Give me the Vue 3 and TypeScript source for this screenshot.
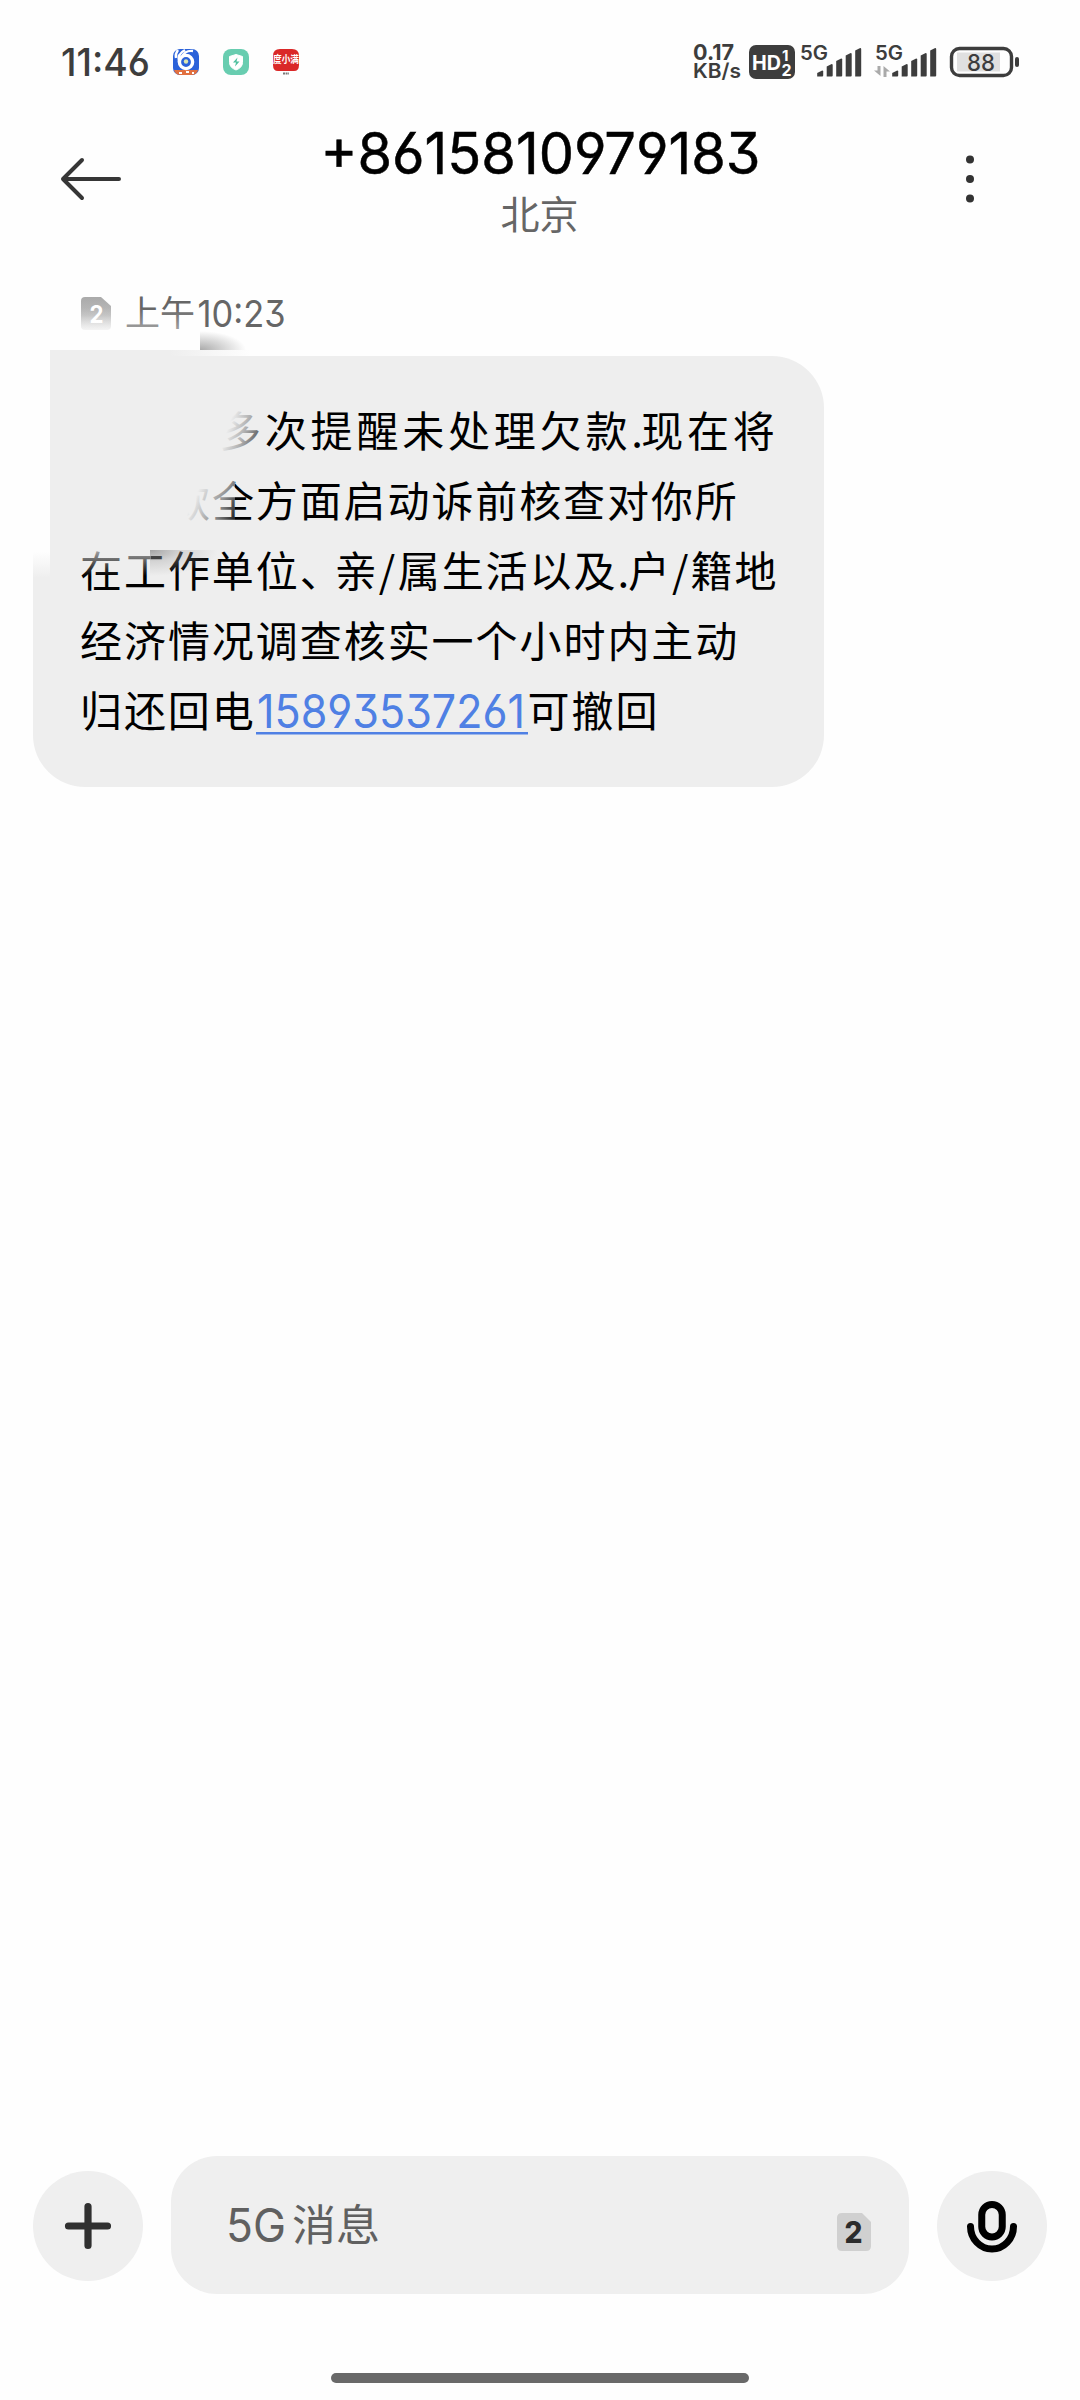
<script setup lang="ts">
interface Segment {
  text: string
  width?: number
  link?: boolean
}
interface Line {
  indent: number
  spacing: number
  segments: Segment[]
}

const lines: Line[] = [
  {
    indent: 139,
    spacing: 3.8,
    segments: [{ text: '多次提醒未处理欠款' }, { text: '.', width: 10 }, { text: '现在将' }],
  },
  { indent: 88, spacing: 1.9, segments: [{ text: '款全方面启动诉前核查对你所' }] },
  {
    indent: 0,
    spacing: 1.95,
    segments: [
      { text: '在工作单位' },
      { text: '、', width: 35 },
      { text: '亲' },
      { text: '/', width: 19 },
      { text: '属生活以及' },
      { text: '.', width: 10.5 },
      { text: '户' },
      { text: '/', width: 18.5 },
      { text: '籍地' },
    ],
  },
  { indent: 0, spacing: 1.95, segments: [{ text: '经济情况调查核实一个小时内主动' }] },
  {
    indent: 0,
    spacing: 1.9,
    segments: [{ text: '归还回电' }, { text: '15893537261', link: true }, { text: '可撤回' }],
  },
]

const bars = [0, 1, 2, 3, 4]
</script>

<template>
  <div class="screen">
    <header class="status">
      <svg width="320" height="110" viewBox="0 0 320 110">
        <text x="61" y="76" class="num" font-size="38" font-weight="500" fill="#3d3d3d" textLength="89" lengthAdjust="spacingAndGlyphs">11:46</text>
        <g>
          <rect x="173" y="49" width="26" height="26" rx="7" fill="#2b62d9" />
          <path d="M174 70h24q-1 5-7 5h-10q-6 0-7-5z" fill="#e2703f" />
          <path d="M179 73h3m4-1h3m3 1h2" stroke="#fff" stroke-width="2" />
          <circle cx="186" cy="62" r="6.6" fill="none" stroke="#fff" stroke-width="3.4" />
          <path d="M179 62q-2-8 6-12M182 57q3-7 11-6M176 58q-1-4 2-8" fill="none" stroke="#fff" stroke-width="2.4" />
          <circle cx="186" cy="61.500" r="2.200" fill="#dbe6b0" />
        </g>
        <g>
          <rect x="223" y="49" width="26" height="26" rx="8" fill="#68cdb0" />
          <path d="M236 54.500l6.500 2v6q0 5-6.500 7.500q-6.500-2.500-6.500-7.500v-6z" fill="#fff" stroke="#fff" stroke-linejoin="round" />
          <path d="M237.500 57.500l-4.500 5h3l-1 4 4.500-5h-3z" fill="#4dbf9e" />
        </g>
        <g>
          <path d="M280 49h12q7 0 7 7v9q0 6-5 6h-16q-5 0-5-6v-9q0-7 7-7z" fill="#da2828" />
          <text x="273" y="63" class="cjk" font-size="10" font-weight="700" fill="#fff" textLength="26" lengthAdjust="spacingAndGlyphs">度小满</text>
          <path d="M283 73.500h6" stroke="#777" stroke-width="2" stroke-dasharray="2 .6" />
        </g>
      </svg>
      <svg width="400" height="110" viewBox="680 0 400 110">
        <g class="num" fill="#3d3d3d" font-weight="700">
          <text x="693" y="60" font-size="22" textLength="41" lengthAdjust="spacingAndGlyphs">0.17</text>
          <text x="693" y="78" font-size="20" textLength="48" lengthAdjust="spacingAndGlyphs" font-weight="600">KB/s</text>
        </g>
        <rect x="749" y="45" width="46" height="34" rx="7" fill="#3d3d3d" />
        <g class="num" fill="#fff" font-weight="700">
          <text x="752" y="69.500" font-size="20" textLength="29" lengthAdjust="spacingAndGlyphs">HD</text>
          <text x="782" y="60.500" font-size="15">1</text>
          <text x="781.500" y="75.500" font-size="16">2</text>
        </g>
        <g v-for="off in [0, 75]" :key="off" :transform="`translate(${off} 0)`" fill="#3d3d3d">
          <text x="800" y="59.500" class="num" font-size="19.500" font-weight="600" textLength="28" lengthAdjust="spacingAndGlyphs">5G</text>
          <path
            v-for="i in bars"
            :key="i"
            :d="`M${817.200 + i * 9.5} 76.500V${[73, 66.5, 61, 55.5, 50.5][i]}l5-2.500q1 0 1 1V75.500q0 1-1 1z`"
          />
        </g>
        <path d="M880.500 66v10l-6.500-5.500h3.500V66zM883.500 77V66l6.500 5.500h-3.500V77z" fill="#aaa" />
        <rect x="957" y="52.500" width="43" height="19" fill="#e0e0e0" />
        <rect x="951.500" y="48.500" width="60" height="27" rx="8" fill="none" stroke="#3d3d3d" stroke-width="3.400" />
        <rect x="1015" y="57" width="4" height="10" rx="2" fill="#3d3d3d" />
        <text x="967" y="71" class="num" font-size="23" font-weight="500" fill="#3d3d3d" textLength="28" lengthAdjust="spacingAndGlyphs">88</text>
      </svg>
    </header>

    <nav class="titlebar">
      <svg class="back" width="64" height="46" viewBox="0 0 64 46">
        <path d="M23 4L4 23l19 19M4 23h56" fill="none" stroke="#363636" stroke-width="4" stroke-linecap="round" stroke-linejoin="round" />
      </svg>
      <div class="contact">
        <svg width="440" height="64" viewBox="320 120 440 64">
          <text x="320.500" y="174" class="num" font-size="57" fill="#000" stroke="#000" stroke-width=".5" textLength="440" lengthAdjust="spacingAndGlyphs">+8615810979183</text>
        </svg>
        <div class="city">北京</div>
      </div>
      <svg class="more" width="12" height="50" viewBox="0 0 12 50" fill="#333">
        <circle cx="6" cy="5.500" r="4" />
        <circle cx="6" cy="25" r="4" />
        <circle cx="6" cy="44.500" r="4" />
      </svg>
    </nav>

    <main class="thread">
      <div class="meta">
        <svg width="30" height="34" viewBox="0 0 30 34">
          <defs>
            <linearGradient id="simFade" x1="0" y1="0" x2="0" y2="1">
              <stop offset="0" stop-color="#aaa" />
              <stop offset=".55" stop-color="#bcbcbc" />
              <stop offset="1" stop-color="#eee" />
            </linearGradient>
          </defs>
          <path d="M4 0h16l10 9v20q0 4-4 4H4q-4 0-4-4V4q0-4 4-4z" fill="url(#simFade)" />
          <text x="8.500" y="26" class="num" font-size="24" font-weight="700" fill="#fff" textLength="14" lengthAdjust="spacingAndGlyphs">2</text>
        </svg>
        <svg width="170" height="60" viewBox="120 278 170 60">
          <text x="125" y="326" class="cjk" font-size="35" fill="#666" textLength="70" lengthAdjust="spacingAndGlyphs">上午</text>
          <text x="197.500" y="327" class="num" font-size="37" fill="#666" textLength="88" lengthAdjust="spacingAndGlyphs">10:23</text>
        </svg>
        <i class="fade-meta"></i>
      </div>

      <section class="bubble">
        <p v-for="(line, n) in lines" :key="n" class="line" :style="{ paddingLeft: line.indent + 'px', letterSpacing: line.spacing + 'px' }">
          <template v-for="(seg, k) in line.segments" :key="k">
            <a v-if="seg.link" class="phone">
              <svg width="272" height="70" viewBox="0 0 272 70">
                <text x="1" y="54" class="num" font-size="46" fill="#4f80e4" textLength="268" lengthAdjust="spacingAndGlyphs">{{ seg.text }}</text>
                <rect y="58" width="272" height="2.500" fill="#4f80e4" />
              </svg>
            </a>
            <span v-else-if="seg.width" class="mark" :style="{ width: seg.width + 'px' }">{{ seg.text }}</span>
            <span v-else>{{ seg.text }}</span>
          </template>
        </p>
        <i class="cover-left"></i>
        <i class="cover-top"></i>
        <i class="smear-top"></i>
        <i class="fade-one"></i>
        <i class="fade-two"></i>
        <i class="fade-three"></i>
        <i class="smear-mid"></i>
      </section>
    </main>

    <footer class="composer">
      <button class="round">
        <svg width="46" height="46" viewBox="0 0 46 46">
          <path d="M23 3.500v39M3.500 23h39" stroke="#303030" stroke-width="7.200" stroke-linecap="round" />
        </svg>
      </button>
      <div class="input">
        <svg width="160" height="60" viewBox="222 2195 160 60">
          <text x="226" y="2242" class="num" font-size="46" fill="#606060" textLength="60" lengthAdjust="spacingAndGlyphs">5G</text>
          <text x="292" y="2241" class="cjk" font-size="43" fill="#606060" textLength="88" lengthAdjust="spacingAndGlyphs">消息</text>
        </svg>
        <svg class="sim" width="34" height="38" viewBox="0 0 34 38">
          <path d="M5 0h20l9 9v24q0 5-5 5H5q-5 0-5-5V5q0-5 5-5z" fill="#d0d0d0" />
          <text x="7.500" y="30" class="num" font-size="30" font-weight="800" fill="#2c2c2c" textLength="18" lengthAdjust="spacingAndGlyphs">2</text>
        </svg>
      </div>
      <button class="round">
        <svg class="mic" width="50" height="52" viewBox="0 0 50 52" fill="none" stroke="#000" stroke-width="7">
          <rect x="14.750" y="3.500" width="20.500" height="32.500" rx="10.250" />
          <path d="M3.500 25.500a21.500 22.500 0 0 0 43 0" stroke-linecap="round" />
        </svg>
      </button>
    </footer>
    <div class="home"><i></i></div>
  </div>
</template>

<style>
body {
  background: #fefefe;
}
</style>

<style scoped>
.screen {
  width: 1080px;
  height: 2400px;
  display: flex;
  flex-direction: column;
  background: #fefefe;
  overflow: hidden;
  font-family: Inter, "Noto Sans CJK SC", sans-serif;
}
svg {
  display: block;
  overflow: visible;
}
.num {
  font-family: Inter, "Noto Sans", sans-serif;
  font-feature-settings: "cv03", "cv04", "cv09";
}
.cjk {
  font-family: "Noto Sans CJK SC", sans-serif;
}
.status {
  height: 110px;
  display: flex;
  justify-content: space-between;
}
.titlebar {
  height: 170px;
  display: flex;
  justify-content: space-between;
  padding: 0 104px 0 59px;
}
.back {
  margin-top: 46px;
}
.more {
  margin-top: 44px;
}
.contact {
  display: flex;
  flex-direction: column;
  align-items: center;
  padding: 10px 8px 0 0;
}
.city {
  margin-top: 1px;
  font: 39px/54px "Noto Sans CJK SC", sans-serif;
  color: #666;
}
.thread {
  flex: 1;
}
.meta {
  position: relative;
  height: 76px;
  display: flex;
  gap: 9px;
  padding-left: 81px;
}
.meta svg:first-child {
  margin-top: 17px;
}
.meta svg:nth-child(2) {
  margin-top: -2px;
}
.fade-meta {
  position: absolute;
  left: 60px;
  top: 28px;
  width: 139px;
  height: 30px;
  background: linear-gradient(#fefefe00, #fefefe88);
}
.bubble {
  position: relative;
  width: 791px;
  height: 431px;
  box-sizing: border-box;
  margin-left: 33px;
  padding: 38px 0 0 47px;
  background: #eee;
  border-radius: 52px;
}
.line {
  margin: 0;
  height: 70px;
  display: flex;
  white-space: nowrap;
  font: 42px/70px "Noto Sans CJK SC", sans-serif;
  color: #000;
}
.mark {
  display: block;
}
.phone {
  letter-spacing: 0;
}
.bubble > i {
  position: absolute;
}
.cover-left {
  left: 0;
  top: 0;
  width: 17px;
  height: 222px;
  background: linear-gradient(#fefefe 88%, #fefefe00);
}
.cover-top {
  left: 17px;
  top: -6px;
  width: 200px;
  height: 60px;
  background: linear-gradient(90deg, #eee 60%, #eeeeee00);
}
.smear-top {
  left: 167px;
  top: -25px;
  width: 46px;
  height: 19px;
  background: radial-gradient(ellipse farthest-side at 0 100%, #aaa, #d0d0d0 45%, #fefefe00 100%);
}
.fade-one {
  left: 180px;
  top: 45px;
  width: 50px;
  height: 60px;
  background: linear-gradient(110deg, #eee 34%, #eeeeeebb 60%, #eeeeee20);
}
.fade-two {
  left: 90px;
  top: 118px;
  width: 112px;
  height: 65px;
  background: linear-gradient(115deg, #eee 58%, #eeeeeea0 78%, #eeeeee00 98%);
}
.fade-three {
  left: 40px;
  top: 190px;
  width: 78px;
  height: 30px;
  background: linear-gradient(#eeeeeed0, #eeeeee00);
}
.smear-mid {
  left: 117px;
  top: 194px;
  width: 68px;
  height: 26px;
  background: radial-gradient(ellipse farthest-side at 0 0, #777777a0, #aaaaaa60 45%, #eeeeee00 100%);
}
.composer {
  height: 138px;
  display: flex;
  align-items: center;
  justify-content: space-between;
  padding: 0 33px;
}
.round {
  width: 110px;
  height: 110px;
  margin: 2px 0 0;
  padding: 0;
  border: 0;
  border-radius: 50%;
  background: #efefef;
  display: flex;
  align-items: center;
  justify-content: center;
}
.mic {
  margin-top: 2px;
}
.input {
  width: 738px;
  height: 138px;
  box-sizing: border-box;
  display: flex;
  align-items: center;
  justify-content: space-between;
  padding: 0 38px 0 51px;
  border-radius: 46px;
  background: #efefef;
}
.sim {
  margin-top: 14px;
}
.home {
  height: 106px;
  display: flex;
  justify-content: center;
}
.home i {
  width: 418px;
  height: 10px;
  margin-top: 79px;
  border-radius: 5px;
  background: #696969;
}
</style>
